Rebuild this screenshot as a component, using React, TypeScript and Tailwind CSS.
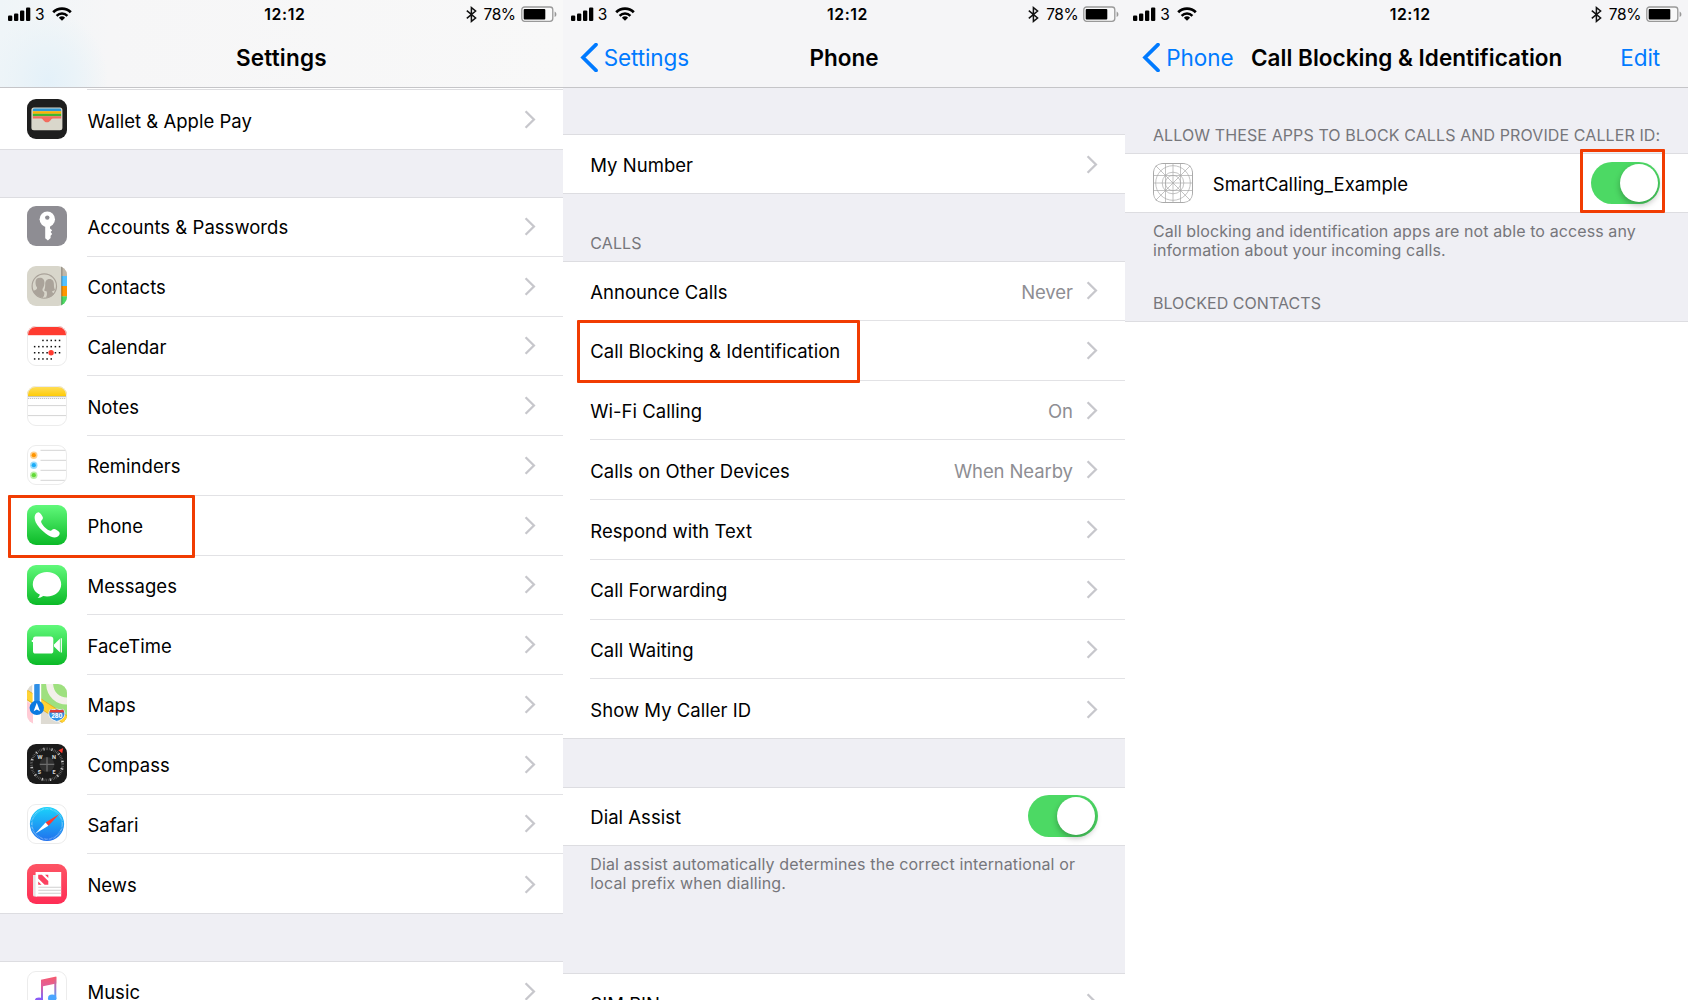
import React, { type ReactNode } from "react";

/* ---------- shared glyphs ---------- */

const Chevron = () => (
  <svg className="h-[19px] w-[12px] shrink-0" viewBox="0 0 12 19" fill="none">
    <path d="M1.6 1.3 9.9 9.5 1.6 17.7" stroke="#c7c7cc" strokeWidth="2.3" />
  </svg>
);

const BackChevron = () => (
  <svg className="h-[29px] w-[18px] shrink-0" viewBox="0 0 18 29" fill="none">
    <path d="M16 1.6 3 14.5 16 27.4" stroke="#007aff" strokeWidth="3.7" strokeLinecap="round" />
  </svg>
);

const Signal = () => (
  <svg className="h-[15px] w-[23px]" viewBox="0 0 23 15" fill="#000">
    <rect x="0" y="8.6" width="4.3" height="5.4" rx="1.1" />
    <rect x="6" y="6.4" width="4.3" height="7.6" rx="1.1" />
    <rect x="12" y="3.4" width="4.3" height="10.6" rx="1.1" />
    <rect x="18" y="0.4" width="4.3" height="13.6" rx="1.1" />
  </svg>
);

const Wifi = () => (
  <svg className="h-[14px] w-[20px]" viewBox="0 0 20 14" fill="none" stroke="#000">
    <path d="M1.2 5.2a12.4 12.4 0 0 1 17.6 0" strokeWidth="2.7" />
    <path d="M4.6 8.8a7.7 7.7 0 0 1 10.8 0" strokeWidth="2.5" />
    <path d="M10 13.8 6.9 10.8a4.5 4.5 0 0 1 6.2 0z" fill="#000" stroke="none" />
  </svg>
);

const Bluetooth = () => (
  <svg className="h-[17px] w-[11px]" viewBox="0 0 11 17" fill="none" stroke="#111" strokeWidth="1.5">
    <path d="M.8 4.6 9.6 12 5.4 15.4V1.6l4.2 3.4L.8 12.4" />
  </svg>
);

const Battery = () => (
  <svg className="h-[17px] w-[36px]" viewBox="0 0 36 17">
    <rect x=".8" y="1" width="31" height="14.4" rx="2.8" fill="#fff" fillOpacity=".3" stroke="#999" strokeWidth="1.3" />
    <rect x="2.7" y="3" width="21.6" height="10.4" rx="1" fill="#000" />
    <path d="M33.6 5.4c2.4 1 2.4 4.600 0 5.600z" fill="#999" />
  </svg>
);

/* ---------- app icons ---------- */

const Icon = ({ children, outline }: { children: ReactNode; outline?: boolean }) => (
  <svg className="h-[40px] w-[40px] shrink-0" viewBox="0 0 40 40">
    <defs>
      <clipPath id="tile">
        <rect width="40" height="40" rx="9" />
      </clipPath>
      <linearGradient id="green" x1="0" y1="0" x2="0" y2="1">
        <stop offset="0" stopColor="#61f97b" />
        <stop offset="1" stopColor="#0bb927" />
      </linearGradient>
    </defs>
    <g clipPath="url(#tile)">{children}</g>
    {outline && <rect x=".5" y=".5" width="39" height="39" rx="8.500" fill="none" stroke="#ececec" />}
  </svg>
);

const WalletIcon = () => (
  <Icon>
    <rect width="40" height="40" fill="#1e1e1e" />
    <rect x="4.400" y="8.500" width="31" height="22.800" rx="2.500" fill="#d9d7cb" />
    <path d="M5.800 12.300V11a1.500 1.500 0 0 1 1.500-1.400h25.400A1.500 1.500 0 0 1 34.200 11v1.300z" fill="#2e98d4" />
    <path d="M5.800 12.300h28.400v2.400H5.800z" fill="#ffb200" />
    <path d="M5.800 14.700h28.400v2.500H5.800z" fill="#40b72f" />
    <path d="M5.800 17.200h28.400v2.300h-8.400c-2 0-2.400 3.800-5.800 3.800s-3.800-3.800-5.800-3.800H5.800z" fill="#f26d5f" />
  </Icon>
);

const KeyIcon = () => (
  <Icon>
    <rect width="40" height="40" fill="#8e8d93" />
    <circle cx="20.300" cy="13.300" r="7.700" fill="#fff" />
    <circle cx="20.300" cy="11.600" r="2.200" fill="#8e8d93" />
    <path d="M18.200 19h4.800v3.600l2.200 1.600-1.600 1.800 1.600 1.900-1.600 1.800v2.400l-2.700 2.500-2.700-2.300z" fill="#fff" />
  </Icon>
);

const ContactsIcon = () => (
  <Icon>
    <rect width="40" height="40" fill="#d8d6cb" />
    <rect x="34.400" width="5.600" height="10" fill="#bfb7a9" />
    <rect x="34.400" y="10" width="5.600" height="10" fill="#54c1ff" />
    <rect x="34.400" y="20" width="5.600" height="10.400" fill="#ff9500" />
    <rect x="34.400" y="30.400" width="5.600" height="10" fill="#4cd964" />
    <rect x="34.200" width="1.200" height="40" fill="#000" fillOpacity=".28" />
    <circle cx="17.300" cy="20" r="12.200" fill="none" stroke="#aaa39a" strokeWidth="1.200" />
    <path d="M22.600 12.900c3 0 4.300 2.400 4.300 5.200 0 2.600.3 4.600 1.200 6-1 .8-1.900 1-3 1.200 0 1.300 1 1.700 2.400 2.500a12 12 0 0 1-8.700 4c1.800-3.300 1-4.300 1-6.400-1.200-.2-2-.4-2.700-1.100 1-1.500 1.100-3.700 1.100-6.200 0-3 1.400-5.200 4.400-5.200z" fill="#aaa39a" />
    <path d="M13 11.700c3.400 0 4.700 2.500 4.400 5.800-.2 2.600-1 4-1.700 5.100-.6 1.500 0 2.600 1 3.200 1.600.9.900 3.600-.7 6-4.300-.4-8.700-3.200-9.900-7 3-1 4-1.400 4-3.400-1-.8-1.500-2.300-1.600-4.600-.2-3.200 1.300-5.100 4.500-5.100z" fill="#aaa39a" />
    <path d="M17.800 26c.5 2-.2 3.800-1.300 5.800" fill="none" stroke="#d8d6cb" strokeWidth=".7" />
  </Icon>
);

const calendarRows: [number, number, number][] = [
  [14.400, 2, 6],
  [20.600, 0, 6],
  [26.700, 0, 6],
  [32.900, 0, 4],
];

const CalendarIcon = () => (
  <Icon outline>
    <rect width="40" height="40" fill="#fff" />
    {calendarRows.map(([y, from, to]) =>
      Array.from({ length: to - from + 1 }, (_, i) => (
        <rect key={`${y}-${i}`} x={6.900 + (from + i) * 4.150} y={y - 0.700} width="1.500" height="1.500" fill="#111" />
      )),
    )}
    <circle cx="24.100" cy="26.800" r="2.700" fill="#ff3b30" />
    <rect width="40" height="9.200" fill="#ff3b30" />
  </Icon>
);

const NotesIcon = () => (
  <Icon outline>
    <defs>
      <linearGradient id="notes" x1="0" y1="0" x2="0" y2="1">
        <stop offset="0" stopColor="#ffdf5e" />
        <stop offset="1" stopColor="#ffcb05" />
      </linearGradient>
    </defs>
    <rect width="40" height="40" fill="#fff" />
    <rect width="40" height="10.200" fill="url(#notes)" />
    <path d="M0 10.700h40" stroke="#b9b4a4" strokeWidth=".9" />
    <path d="M.8 12.500h39" stroke="#b5b5b5" strokeWidth="1" strokeDasharray="1 1" />
    <path d="M0 19.600h40M0 29.600h40" stroke="#d4d4d4" />
  </Icon>
);

const ReminderDot = ({ y, color }: { y: number; color: string }) => (
  <g fill={color}>
    <circle cx="6.800" cy={y} r="3.700" fillOpacity=".45" />
    <circle cx="6.800" cy={y} r="2.100" />
  </g>
);

const RemindersIcon = () => (
  <Icon outline>
    <rect width="40" height="40" fill="#fff" />
    <path d="M13.500 5.300H39M13.500 15.300H40M13.500 25.300H40M13.500 35.300H38.500" stroke="#d4d4d4" />
    <ReminderDot y={10.200} color="#ff9500" />
    <ReminderDot y={20.200} color="#1badf8" />
    <ReminderDot y={30.200} color="#63da38" />
  </Icon>
);

const PhoneIcon = () => (
  <Icon>
    <rect width="40" height="40" fill="url(#green)" />
    <path
      d="M8.300 9.600c1-1.500 2.600-2.400 3.800-2.200 1.300.5 3.200 3.300 3.800 5 .4 1.700-1.700 2.700-1.800 4 .2 3 5.700 8.500 9.200 9.300 1.500.2 2.300-1.900 4-1.600 1.800.4 4.600 2.300 5.300 3.600.4 1.400-.9 3.500-2.700 4.400-2.600 1.300-6.800-.3-11.200-3.500-4.500-3.400-8.300-7.700-10-11.300-1.200-2.900-1.500-5.500-.4-7.700z"
      fill="#fff"
    />
  </Icon>
);

const MessagesIcon = () => (
  <Icon>
    <rect width="40" height="40" fill="url(#green)" />
    <path
      d="M20 7c8 0 14.200 5.300 14.200 12.200S28 31.400 20 31.400c-1.300 0-2.600-.1-3.800-.4-1.600 1.300-3.600 1.900-5.600 1.900 1.200-.8 2-1.900 2.200-3.300-4.300-2-7-5.900-7-10.400C5.800 12.300 12 7 20 7z"
      fill="#fff"
    />
  </Icon>
);

const FaceTimeIcon = () => (
  <Icon>
    <rect width="40" height="40" fill="url(#green)" />
    <rect x="6" y="11.600" width="20.300" height="17" rx="2.600" fill="#fff" />
    <path d="M4.800 15h1.600v2H4.800zM27 19.400l5.900-5.600v13.400L27 21.600z" fill="#fff" />
    <path d="M34.300 13.200v14.200" stroke="#fff" strokeWidth="1.200" />
  </Icon>
);

const MapsIcon = () => (
  <Icon>
    <rect width="40" height="40" fill="#f3f0ea" />
    <path d="M14 0v22l26 16V0z" fill="#9ee07f" />
    <path d="M14 24v16h20z" fill="#dedbd3" />
    <path d="M22.500-1C23 11 31 17.500 41 17" fill="none" stroke="#f3f0ea" strokeWidth="7" />
    <path d="M0 0h5v10L0 6z" fill="#dcd9d2" />
    <path d="M0 17l6 5v18H0z" fill="#ffcbd5" />
    <path d="M-2 9.500 42 38" stroke="#e5ad1d" strokeWidth="9" />
    <path d="M-2 9.500 42 38" stroke="#ffd334" strokeWidth="7.600" />
    <path d="M6 28h7.800v12H6zM5.600 0h8.600v20H5.600z" fill="#fff" />
    <path d="M7.200 0h5.500v23H7.200z" fill="#2f8fe6" />
    <circle cx="9.800" cy="23.800" r="7.200" fill="#0b79e0" />
    <path d="M9.800 18.700 13 27.300l-3.200-1.700-3.200 1.700z" fill="#fff" />
    <path d="M23.500 25.200c2 .8 3.600.5 6.300-.2 2.700.7 4.300 1 6.300.2 1.200 1.700 2 3.300 1.600 5.400-.3 3-2.900 5.300-7.900 6.800-5-1.500-7.600-3.800-7.900-6.800-.3-2 .4-3.700 1.600-5.400z" fill="#2f8fe6" stroke="#fff" strokeWidth=".8" />
    <path d="M23.500 25.600c2 .8 3.600.5 6.300-.2 2.700.7 4.300 1 6.300.2l1.100 2.900H22.400z" fill="#e03b36" />
    <text x="29.800" y="34.200" textAnchor="middle" fontFamily="Inter, sans-serif" fontWeight="800" fontSize="5.600" fill="#fff">280</text>
  </Icon>
);

const CompassIcon = () => (
  <Icon>
    <rect width="40" height="40" fill="#1b1b1b" />
    <circle cx="20" cy="20.400" r="15.600" fill="none" stroke="#777" strokeWidth="2.600" strokeDasharray=".55 1.083" />
    <circle cx="20" cy="20.400" r="15.600" fill="none" stroke="#e8e8e8" strokeWidth="2.800" strokeDasharray=".8 7.368" strokeDashoffset="4" />
    <circle cx="20" cy="20.400" r="7.400" fill="#2f2f2f" />
    <path d="M20 13.200v14.400M12.800 20.400h14.400" stroke="#6c6c6c" strokeWidth="1.300" />
    <g fontFamily="Inter, sans-serif" fontWeight="700" fontSize="5.200" fill="#ddd" textAnchor="middle">
      <text x="12.900" y="14.600">W</text>
      <text x="27" y="14.600">N</text>
      <text x="12.500" y="29.600">S</text>
      <text x="27.200" y="29.600">E</text>
    </g>
    <path d="M31.400 6.300 36.200 4l-1 5.200z" fill="#ff3b30" />
  </Icon>
);

const SafariIcon = () => (
  <Icon outline>
    <defs>
      <linearGradient id="safari" x1="0" y1="0" x2="0" y2="1">
        <stop offset="0" stopColor="#1bd3fb" />
        <stop offset="1" stopColor="#2070ee" />
      </linearGradient>
    </defs>
    <rect width="40" height="40" fill="#fff" />
    <circle cx="20" cy="20" r="17.100" fill="url(#safari)" />
    <circle cx="20" cy="20" r="15.200" fill="none" stroke="#fff" strokeOpacity=".65" strokeWidth="1.600" strokeDasharray=".4 .927" />
    <path d="m32.400 10-11 11.700-2.800-3.300z" fill="#ff3b30" />
    <path d="m8.200 29.800 10.400-11.400 2.800 3.300z" fill="#fff" />
  </Icon>
);

const NewsIcon = () => (
  <Icon>
    <defs>
      <linearGradient id="news" x1="0" y1="0" x2="0" y2="1">
        <stop offset="0" stopColor="#fd5464" />
        <stop offset="1" stopColor="#fe2d55" />
      </linearGradient>
    </defs>
    <rect width="40" height="40" fill="url(#news)" />
    <path d="M6 11h4v21.600H7.600A1.600 1.600 0 0 1 6 31z" fill="#e6e3e3" />
    <path d="M8.600 8h25.600v24.600H8.600z" fill="#fff" />
    <path d="M11.300 23.200h22.900M11.300 26.200h22.900M11.300 29.200h22.900" stroke="#cfcfcf" strokeWidth="1.100" />
    <path d="M11.200 10.700h3.700l6.400 6.400v3.700h-3.700l-6.400-6.400zM18 10.700h3.300V14zM11.200 17.500v3.300h3.300z" fill="#fb4160" />
  </Icon>
);

const MusicIcon = () => (
  <Icon outline>
    <defs>
      <linearGradient id="music" gradientUnits="userSpaceOnUse" x1="22" y1="5" x2="18" y2="36">
        <stop offset="0" stopColor="#f8596c" />
        <stop offset=".35" stopColor="#e0609c" />
        <stop offset=".7" stopColor="#8a67f0" />
        <stop offset="1" stopColor="#4aa5ff" />
      </linearGradient>
      <linearGradient id="musicStem" gradientUnits="userSpaceOnUse" x1="28" y1="6" x2="28" y2="30">
        <stop offset="0" stopColor="#f8596c" />
        <stop offset=".45" stopColor="#a676c8" />
        <stop offset=".9" stopColor="#4aa5ff" />
      </linearGradient>
    </defs>
    <rect width="40" height="40" fill="#fff" />
    <path d="M14 8.700 29.300 5.600v7L16 15.300V30H14z" fill="url(#music)" />
    <path d="M27.300 6h2v22h-2z" fill="url(#musicStem)" />
    <ellipse cx="12" cy="30.200" rx="4.200" ry="3.600" fill="#8a5cf6" />
    <ellipse cx="25.200" cy="27.200" rx="4.200" ry="3.600" fill="#4aa5ff" />
  </Icon>
);

const GridIcon = () => (
  <Icon>
    <g fill="none" stroke="#a9a9a9" strokeWidth=".7">
      <rect x=".5" y=".5" width="39" height="39" rx="8.600" strokeWidth="1" />
      <path d="M12.500 0v40M20 0v40M27.500 0v40M0 12.500h40M0 20h40M0 27.500h40M2 2l36 36M38 2 2 38" />
      <circle cx="20" cy="20" r="17.300" />
      <circle cx="20" cy="20" r="10.800" />
      <circle cx="20" cy="20" r="7.600" />
    </g>
  </Icon>
);

/* ---------- building blocks ---------- */

const Toggle = () => (
  <div className="mr-[0.800px] mb-[1px] flex h-[42.300px] w-[69.500px] shrink-0 items-center justify-end rounded-full bg-[#4cd964] pr-[2.300px]">
    <div className="h-[38px] w-[38px] rounded-full bg-white shadow-[0_3px_6px_rgba(0,0,0,0.28)]" />
  </div>
);

const Marker = ({ className }: { className: string }) => (
  <div className={`pointer-events-none absolute z-10 rounded-[1px] border-[3px] border-[#f13c02] ${className}`} />
);

const StatusBar = () => (
  <div className="flex h-7 items-center pr-[6px] pl-2 text-[15.500px] leading-none">
    <div className="flex flex-1 items-center">
      <Signal />
      <span className="ml-1 w-[17px] pt-px tracking-[-0.400px]">3</span>
      <Wifi />
    </div>
    <span className="pt-px pl-[5px] text-[15.800px] font-semibold tracking-[0.600px]">12:12</span>
    <div className="flex flex-1 items-center justify-end">
      <Bluetooth />
      <span className="mr-[5px] ml-[7px] pt-px tracking-[-0.400px]">78%</span>
      <Battery />
    </div>
  </div>
);

type HeaderProps = { title: string; back?: string; action?: string; tint: string; titleClass?: string };

const Header = ({ title, back, action, tint, titleClass = "tracking-[0.020px]" }: HeaderProps) => (
  <header className={`h-[88px] shrink-0 border-b border-[#c5c5c8] ${tint}`}>
    <StatusBar />
    <div className="grid h-[59px] grid-cols-[1fr_auto_1fr] items-center pr-[28px] pl-[17px] text-[22.500px] leading-none whitespace-nowrap">
      <div className="flex w-0 items-center gap-[6px] text-[#007aff]">
        {back && (
          <>
            <BackChevron />
            <span className="pt-[1.500px] tracking-[-0.100px]">{back}</span>
          </>
        )}
      </div>
      <h1 className={`pt-[1.500px] pl-[11px] font-semibold ${titleClass}`}>{title}</h1>
      <div className="flex w-0 justify-end justify-self-end pt-[1.500px] tracking-[-0.100px] text-[#007aff]">
        <span>{action}</span>
      </div>
    </div>
  </header>
);

type RowProps = {
  label: string;
  icon?: ReactNode;
  value?: string;
  control?: ReactNode;
  last?: boolean;
  marker?: ReactNode;
};

const Row = ({ label, icon, value, control, last, marker }: RowProps) => (
  <div className="relative flex h-[59.750px] shrink-0 items-stretch">
    {icon && <div className="flex w-[60px] shrink-0 items-center pb-[1.200px] pl-[27.400px]">{icon}</div>}
    <div className={`flex flex-1 items-center pr-[27px] ${icon ? "ml-[27.400px]" : "ml-[27.600px]"} ${last ? "" : "border-b border-[#e2e2e5]"}`}>
      <span className="flex-1 pt-[2.600px] text-[18.500px] leading-none tracking-[0.030px] whitespace-nowrap text-black">{label}</span>
      {value && <span className="mr-[13.500px] pt-[2.600px] text-[18.500px] leading-none tracking-[-0.100px] text-[#8e8e93]">{value}</span>}
      {control ?? <Chevron />}
    </div>
    {marker}
  </div>
);

const Group = ({ children, openTop }: { children: ReactNode; openTop?: boolean }) => (
  <section className={`shrink-0 border-b border-[#dddde1] bg-white ${openTop ? "" : "border-t"}`}>
    <div className={openTop ? "-mb-px" : "-my-px"}>{children}</div>
  </section>
);

/* ---------- screens ---------- */

const apps: { label: string; icon: ReactNode }[] = [
  { label: "Accounts & Passwords", icon: <KeyIcon /> },
  { label: "Contacts", icon: <ContactsIcon /> },
  { label: "Calendar", icon: <CalendarIcon /> },
  { label: "Notes", icon: <NotesIcon /> },
  { label: "Reminders", icon: <RemindersIcon /> },
  { label: "Phone", icon: <PhoneIcon /> },
  { label: "Messages", icon: <MessagesIcon /> },
  { label: "FaceTime", icon: <FaceTimeIcon /> },
  { label: "Maps", icon: <MapsIcon /> },
  { label: "Compass", icon: <CompassIcon /> },
  { label: "Safari", icon: <SafariIcon /> },
  { label: "News", icon: <NewsIcon /> },
];

const SettingsScreen = () => (
  <div className="flex min-w-0 flex-1 flex-col overflow-hidden bg-[#efeff4]">
    <Header
      title="Settings"
      titleClass="tracking-[0.200px]"
      tint="bg-[#f7f7f8] bg-[radial-gradient(ellipse_60px_70px_at_48px_80px,#e4f1f9_0%,#eaf3f8_45%,rgba(247,247,248,0)_100%),linear-gradient(90deg,#eff5f8_0px,#f6f6f7_110px,#f8f8f8_100%)]"
    />
    <Group openTop>
      <div className="ml-[87px] h-[2px] border-b border-[#dddde0]" />
      <Row label="Wallet & Apple Pay" icon={<WalletIcon />} last />
    </Group>
    <div className="h-[47.250px] shrink-0" />
    <Group>
      {apps.map((app, i) => (
        <Row
          key={app.label}
          {...app}
          last={i === apps.length - 1}
          marker={app.label === "Phone" ? <Marker className="-top-[0.300px] left-[7.500px] h-[63px] w-[187px]" /> : undefined}
        />
      ))}
    </Group>
    <div className="h-[47.400px] shrink-0" />
    <Group>
      <Row label="Music" icon={<MusicIcon />} last />
    </Group>
  </div>
);

const calls: { label: string; value?: string }[] = [
  { label: "Announce Calls", value: "Never" },
  { label: "Call Blocking & Identification" },
  { label: "Wi-Fi Calling", value: "On" },
  { label: "Calls on Other Devices", value: "When Nearby" },
  { label: "Respond with Text" },
  { label: "Call Forwarding" },
  { label: "Call Waiting" },
  { label: "Show My Caller ID" },
];

const PhoneScreen = () => (
  <div className="flex min-w-0 flex-1 flex-col overflow-hidden bg-[#efeff4]">
    <Header title="Phone" back="Settings" tint="bg-[#f5f5f7]" />
    <div className="h-[46.400px] shrink-0" />
    <Group>
      <Row label="My Number" last />
    </Group>
    <div className="flex h-[67px] shrink-0 items-end pb-[10px] pl-[27.600px]">
      <h2 className="text-[16px] leading-none tracking-[0.100px] text-[#76767b]">CALLS</h2>
    </div>
    <Group>
      {calls.map((row, i) => (
        <Row
          key={row.label}
          {...row}
          last={i === calls.length - 1}
          marker={i === 1 ? <Marker className="-top-px left-[14.700px] h-[63px] w-[283px]" /> : undefined}
        />
      ))}
    </Group>
    <div className="h-[47.400px] shrink-0" />
    <Group>
      <Row label="Dial Assist" control={<Toggle />} last />
    </Group>
    <p className="h-[126.400px] shrink-0 pt-[9px] pl-[27.600px] text-[16px] leading-[19px] tracking-[0.136px] whitespace-nowrap text-[#76767b]">
      Dial assist automatically determines the correct international or
      <br />
      local prefix when dialling.
    </p>
    <Group>
      <Row label="SIM PIN" last />
    </Group>
  </div>
);

const BlockingScreen = () => (
  <div className="flex min-w-0 flex-1 flex-col overflow-hidden bg-[#efeff4]">
    <Header title="Call Blocking & Identification" back="Phone" action="Edit" tint="bg-[#f5f5f7]" />
    <div className="flex h-[65.400px] shrink-0 items-end pb-[10px] pl-[27.600px]">
      <h2 className="text-[16px] leading-none tracking-[0.108px] whitespace-nowrap text-[#76767b]">
        ALLOW THESE APPS TO BLOCK CALLS AND PROVIDE CALLER ID:
      </h2>
    </div>
    <Group>
      <Row
        label="SmartCalling_Example"
        icon={<GridIcon />}
        control={<Toggle />}
        last
        marker={<Marker className="-top-[4px] right-[23.300px] h-[63.500px] w-[85px]" />}
      />
    </Group>
    <p className="shrink-0 pt-[9px] pl-[27.600px] text-[16px] leading-[19px] tracking-[0.100px] whitespace-nowrap text-[#76767b]">
      Call blocking and identification apps are not able to access any
      <br />
      information about your incoming calls.
    </p>
    <div className="flex h-[60.800px] shrink-0 items-end pb-[10px] pl-[27.600px]">
      <h2 className="text-[16px] leading-none tracking-[0.060px] text-[#76767b]">BLOCKED CONTACTS</h2>
    </div>
    <div className="flex-1 border-t border-[#dddde1] bg-white" />
  </div>
);

export default function App() {
  return (
    <main className="flex h-[1000px] w-[1688px] overflow-hidden bg-[#efeff4] font-['Inter',sans-serif] text-black">
      <SettingsScreen />
      <PhoneScreen />
      <BlockingScreen />
    </main>
  );
}
